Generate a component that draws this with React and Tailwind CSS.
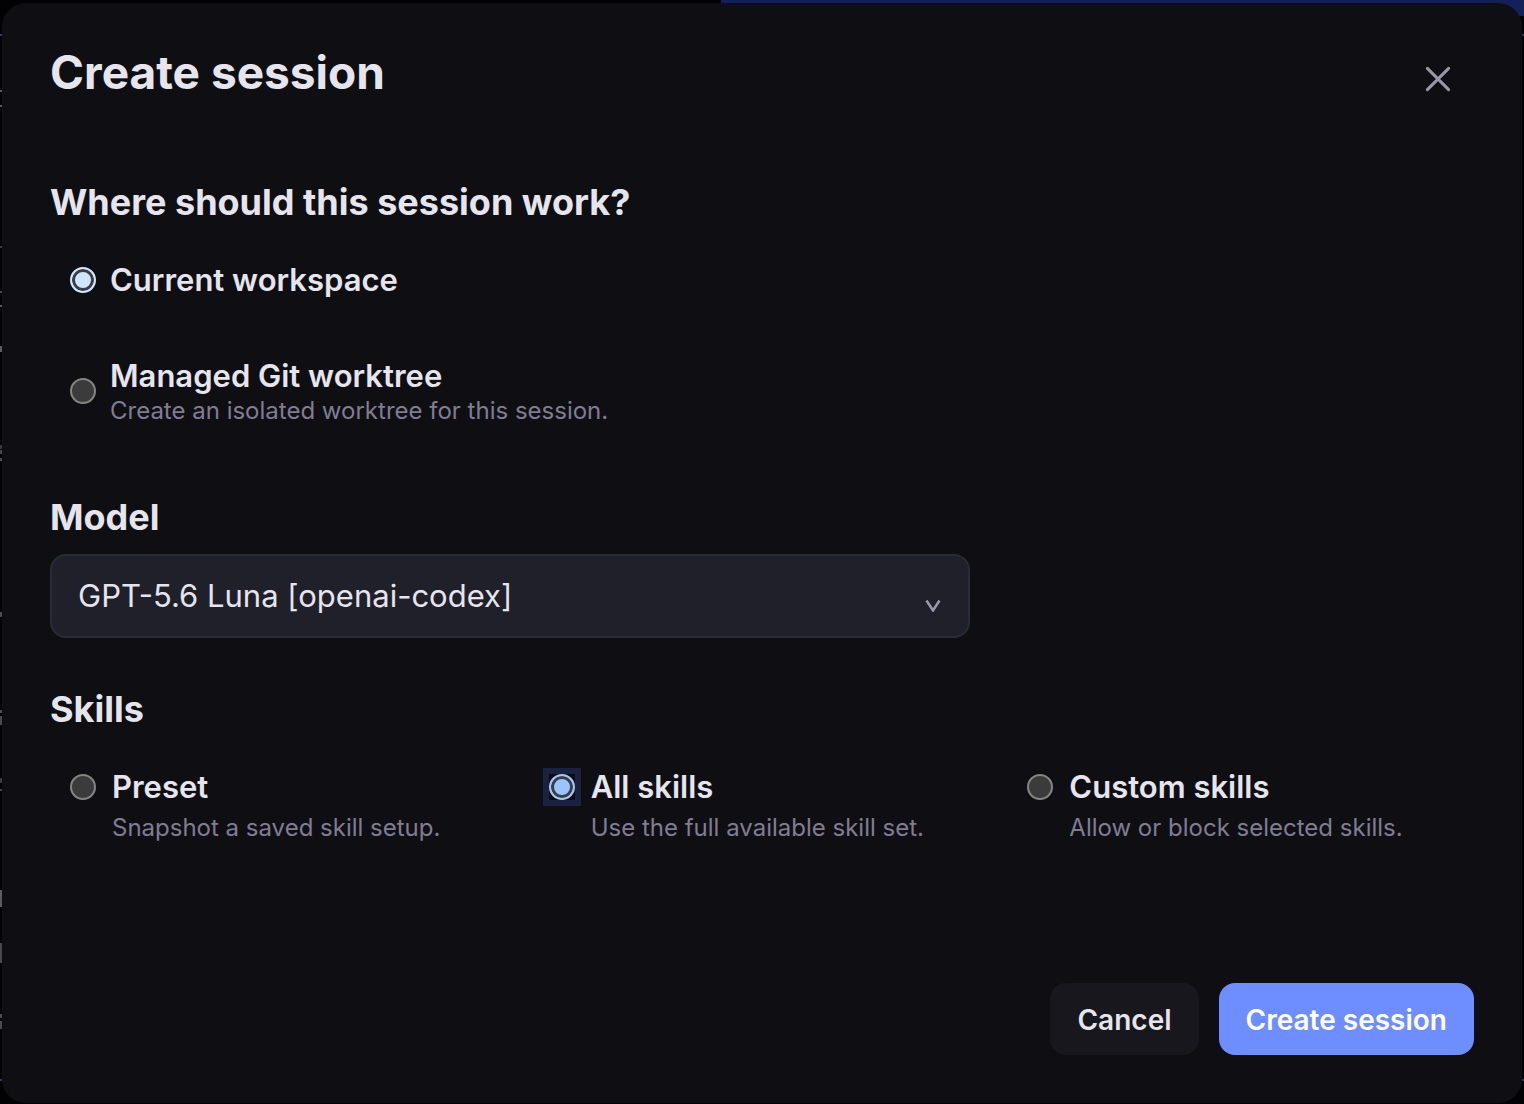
import { useState } from "react";

// Slivers of the dimmed page that stay visible along the dialog's left edge.
const pageMarks = [
  { top: 34, height: 2, color: "#3a3870" },
  { top: 90, height: 2, color: "#5c5c60" },
  { top: 105, height: 2, color: "#5c5c60" },
  { top: 246, height: 2, color: "#3c3c40" },
  { top: 291, height: 2, color: "#4a4a4e" },
  { top: 305, height: 2, color: "#5c5c60" },
  { top: 346, height: 6, color: "#5c5c60" },
  { top: 445, height: 4, color: "#3c3c40" },
  { top: 450, height: 4, color: "#4a4a4e" },
  { top: 458, height: 3, color: "#4a4a4e" },
  { top: 612, height: 5, color: "#4a4a4e" },
  { top: 710, height: 3, color: "#4a4a4e" },
  { top: 716, height: 9, color: "#4a4a4e" },
  { top: 778, height: 5, color: "#3c3c40" },
  { top: 789, height: 2, color: "#4a4a4e" },
  { top: 890, height: 17, color: "#5c5c60" },
  { top: 943, height: 20, color: "#4a4a4e" },
  { top: 1014, height: 4, color: "#4a4a4e" },
  { top: 1021, height: 8, color: "#4a4a4e" },
  { top: 1079, height: 2, color: "#3a3870" },
];

function Radio({ id, name, checked, onChange, tone, highlighted }) {
  return (
    <span className={highlighted ? "-m-1.5 block shrink-0 border-6 border-[#1b2240] bg-[#090b12]" : "block shrink-0"}>
      <input
        type="radio"
        id={id}
        name={name}
        checked={checked}
        onChange={onChange}
        className={
          "block size-[26px] appearance-none rounded-full border-2 border-[#858585] bg-[#3b3b3b] outline-none checked:shadow-[inset_0_0_0_3px_#3b3f44] " +
          (tone === "pale"
            ? "checked:border-[#d3e7ff] checked:bg-[#cfe5ff]"
            : "checked:border-[#a0c8ff] checked:bg-[#9ac4ff]")
        }
      />
    </span>
  );
}

const skillOptions = [
  { id: "preset", title: "Preset", hint: "Snapshot a saved skill setup." },
  { id: "all", title: "All skills", hint: "Use the full available skill set." },
  { id: "custom", title: "Custom skills", hint: "Allow or block selected skills." },
];

export default function App() {
  const [place, setPlace] = useState("current");
  const [skills, setSkills] = useState("all");

  return (
    <div className="relative flex min-h-screen flex-col bg-[#020204] px-0.5 pt-[3px] pb-px font-['Inter',sans-serif] text-[#e6e5ee]">
      <div aria-hidden="true" className="absolute top-0 right-0 h-4 w-[803px] max-w-full bg-[#14205a]" />
      {pageMarks.map((m) => (
        <div
          key={m.top}
          aria-hidden="true"
          className="absolute left-0 w-0.5"
          style={{ top: m.top, height: m.height, background: m.color }}
        />
      ))}
      <div aria-hidden="true" className="absolute top-[34px] right-0 h-0.5 w-0.5 bg-[#2c3560]" />
      <div aria-hidden="true" className="absolute top-[1079px] right-0 h-0.5 w-0.5 bg-[#2c3560]" />

      <form
        role="dialog"
        aria-labelledby="dialog-title"
        onSubmit={(e) => e.preventDefault()}
        className="relative flex grow flex-col rounded-3xl bg-[#0f0f13] px-12 pt-[39px] pb-12"
      >
        <header className="flex items-start justify-between">
          <h1 id="dialog-title" className="text-[46px] leading-[60px] font-bold">
            Create session
          </h1>
          <button type="button" aria-label="Close" className="flex h-[74px] w-[72px] items-center justify-center text-[#9a97ad]">
            <svg viewBox="0 0 28 28" className="size-7" fill="none" stroke="currentColor" strokeWidth="3" strokeLinecap="round">
              <path d="M3.4 3.4 24.6 24.6M24.6 3.4 3.4 24.6" />
            </svg>
          </button>
        </header>

        <fieldset className="mt-[62px]">
          <legend className="text-[36px] leading-[48px] font-bold">Where should this session work?</legend>
          <div className="mt-[34px] flex items-center gap-3.5 pl-5">
            <Radio id="place-current" name="place" tone="pale" checked={place === "current"} onChange={() => setPlace("current")} />
            <label htmlFor="place-current" className="text-[31px] leading-[40px] font-semibold">
              Current workspace
            </label>
          </div>
          <div className="mt-14 flex items-center gap-3.5 pl-5">
            <Radio id="place-worktree" name="place" tone="pale" checked={place === "worktree"} onChange={() => setPlace("worktree")} />
            <label htmlFor="place-worktree" className="flex flex-col">
              <span className="text-[31px] leading-[40px] font-semibold">Managed Git worktree</span>
              <span className="text-[24px] leading-[30px] text-[#807d93]">Create an isolated worktree for this session.</span>
            </label>
          </div>
        </fieldset>

        <div className="mt-[67px] flex flex-col">
          <label htmlFor="model" className="text-[36px] leading-[48px] font-bold">
            Model
          </label>
          <div className="relative mt-[13px] w-full max-w-[920px]">
            <select
              id="model"
              className="block h-[84px] w-full appearance-none rounded-2xl border-2 border-[#2b2b38] bg-[#20202a] px-[26px] text-[31px] outline-none"
            >
              <option>GPT-5.6 Luna [openai-codex]</option>
            </select>
            <svg
              viewBox="0 0 16 12"
              aria-hidden="true"
              className="pointer-events-none absolute right-[29px] bottom-[26px] h-3 w-4"
              fill="none"
              stroke="#9b98ad"
              strokeWidth="2.5"
            >
              <path d="M1.5 0.5 8 10.5 14.5 0.5" />
            </svg>
          </div>
        </div>

        <fieldset className="mt-[47px]">
          <legend className="text-[36px] leading-[48px] font-bold">Skills</legend>
          <div className="mt-[34px] grid grid-cols-3 gap-3">
            {skillOptions.map((o) => (
              <div key={o.id} className="flex items-start gap-4 pl-5">
                <div className="flex h-10 items-center">
                  <Radio
                    id={"skills-" + o.id}
                    name="skills"
                    tone="blue"
                    checked={skills === o.id}
                    highlighted={skills === o.id}
                    onChange={() => setSkills(o.id)}
                  />
                </div>
                <label htmlFor={"skills-" + o.id} className="flex flex-col gap-1.5">
                  <span className="text-[31px] leading-[40px] font-semibold">{o.title}</span>
                  <span className="text-[24px] leading-[30px] text-[#807d93]">{o.hint}</span>
                </label>
              </div>
            ))}
          </div>
        </fieldset>

        <footer className="mt-auto flex justify-end gap-5 text-[28px] font-semibold">
          <button type="button" className="h-[72px] rounded-2xl bg-[#17171d] px-[27px] pt-0.5">
            Cancel
          </button>
          <button type="submit" className="h-[72px] rounded-2xl bg-[#6e8dff] px-[27px] pt-0.5 text-white">
            Create session
          </button>
        </footer>
      </form>
    </div>
  );
}
